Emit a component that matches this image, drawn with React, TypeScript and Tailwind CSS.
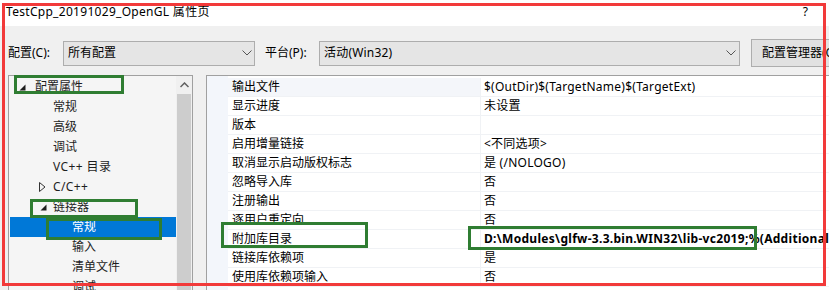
import React from "react";

const FONT = { fontFamily: '"Noto Sans", "Noto Sans CJK SC", sans-serif' };

function Chevron() {
  return (
    <svg width="10" height="6" viewBox="0 0 10 6" className="shrink-0">
      <path d="M0.5 0.5 L5 5 L9.5 0.5" fill="none" stroke="#555" strokeWidth="1" />
    </svg>
  );
}

function FilledTri() {
  return (
    <svg width="7" height="7" viewBox="0 0 7 7" className="shrink-0">
      <path d="M6.5 0.5 L6.5 6.5 L0.5 6.5 Z" fill="#1e1e1e" />
    </svg>
  );
}

function OpenTri() {
  return (
    <svg width="7" height="10" viewBox="0 0 7 10" className="shrink-0">
      <path d="M0.5 0.5 L6 5 L0.5 9.5 Z" fill="none" stroke="#333" strokeWidth="1" />
    </svg>
  );
}

type TreeItem = { label: string; level: number; icon?: "filled" | "open"; selected?: boolean };

const tree: TreeItem[] = [
  { label: "配置属性", level: 0, icon: "filled" },
  { label: "常规", level: 1 },
  { label: "高级", level: 1 },
  { label: "调试", level: 1 },
  { label: "VC++ 目录", level: 1 },
  { label: "C/C++", level: 1, icon: "open" },
  { label: "链接器", level: 1, icon: "filled" },
  { label: "常规", level: 2, selected: true },
  { label: "输入", level: 2 },
  { label: "清单文件", level: 2 },
  { label: "调试", level: 2 },
];

const rows: [string, string, boolean?][] = [
  ["输出文件", "$(OutDir)$(TargetName)$(TargetExt)"],
  ["显示进度", "未设置"],
  ["版本", ""],
  ["启用增量链接", "<不同选项>"],
  ["取消显示启动版权标志", "是 (/NOLOGO)"],
  ["忽略导入库", "否"],
  ["注册输出", "否"],
  ["逐用户重定向", "否"],
  ["附加库目录", "D:\\Modules\\glfw-3.3.bin.WIN32\\lib-vc2019;%(AdditionalLibraryDirectories)", true],
  ["链接库依赖项", "是"],
  ["使用库依赖项输入", "否"],
];

export default function App() {
  return (
    <div
      className="relative w-[829px] h-[290px] overflow-hidden bg-[#f0f0f0] text-[12px] text-black"
      style={FONT}
    >
      {/* title bar */}
      <div className="h-[26px] bg-white flex items-center justify-between pl-[6px] pr-[21px]">
        <span className="leading-none -mt-[2px] tracking-[0.3px]">TestCpp_20191029_OpenGL 属性页</span>
        <span className="leading-none -mt-[2px]">?</span>
      </div>

      {/* toolbar */}
      <div className="flex items-center h-[28px] mt-[13px] pl-[8px]">
        <span className="w-[55px] shrink-0 whitespace-nowrap">配置(C):</span>
        <div className="w-[192px] h-[25px] shrink-0 bg-[#e5e5e5] border border-[#adadad] flex items-center justify-between pl-[4px] pr-[2px]">
          <span>所有配置</span>
          <Chevron />
        </div>
        <span className="w-[54px] shrink-0 ml-[10px] whitespace-nowrap">平台(P):</span>
        <div className="w-[421px] h-[25px] shrink-0 bg-[#e5e5e5] border border-[#adadad] flex items-center justify-between pl-[4px] pr-[3px]">
          <span className="tracking-[0.2px]">活动(Win32)</span>
          <Chevron />
        </div>
        <div className="ml-[11px] w-[90px] h-[28px] shrink-0 bg-[#e1e1e1] border border-[#adadad] flex items-center pl-[10px] whitespace-nowrap">
          配置管理器(O)...
        </div>
      </div>

      {/* panels */}
      <div className="flex mt-[8px] pl-[8px] gap-[13px]">
        {/* tree */}
        <div className="w-[185px] h-[240px] shrink-0 border border-[#a0a0a0] bg-[#f5f5f5] flex">
          <div className="flex-1 pt-[1px] pl-[1px]">
            {tree.map((t, i) => (
              <div
                key={i}
                className={
                  "h-[20px] flex items-center " +
                  (t.selected ? "bg-[#0078d7] text-white" : "text-[#1e1e1e]")
                }
              >
                {t.level === 0 && (
                  <>
                    <span className="w-[9px] shrink-0" />
                    <FilledTri />
                    <span className="w-[9px] shrink-0" />
                  </>
                )}
                {t.level === 1 && (
                  <>
                    <span className="w-[29px] shrink-0" />
                    <span className="w-[14px] shrink-0 flex items-center">
                      {t.icon === "filled" && <span className="ml-[1px] flex"><FilledTri /></span>}
                      {t.icon === "open" && <OpenTri />}
                    </span>
                  </>
                )}
                {t.level === 2 && <span className="w-[62px] shrink-0" />}
                <span className={"whitespace-nowrap " + (t.label.includes("C") ? "tracking-[0.4px]" : "")}>{t.label}</span>
              </div>
            ))}
          </div>
          <div className="w-[16px] shrink-0 bg-[#f0f0f0] flex flex-col items-center">
            <div className="h-[18px] flex items-center justify-center">
              <svg width="9" height="6" viewBox="0 0 9 6">
                <path d="M0.5 5 L4.5 1 L8.5 5" fill="none" stroke="#606060" strokeWidth="1.5" />
              </svg>
            </div>
            <div className="w-[14px] flex-1 bg-[#cdcdcd]" />
          </div>
        </div>

        {/* property grid */}
        <div className="flex-1 h-[240px] border-t border-l border-[#a0a0a0] bg-white flex">
          <div className="w-[21px] shrink-0 bg-[#f3f6fb]" />
          <div className="flex-1 pt-[2px]">
            {rows.map(([k, v, bold], i) => (
              <div key={i} className="h-[19px] flex border-b border-[#f0f2f5]">
                <div
                  className={
                    "w-[253px] shrink-0 pl-[4px] flex items-center whitespace-nowrap border-r border-[#f0f2f5] " +
                    (i === 0 ? "bg-[#f4f6fa]" : "")
                  }
                >
                  {k}
                </div>
                <div
                  className={
                    "pl-[3px] flex items-center whitespace-nowrap " +
                    (bold ? "font-bold tracking-[0.3px]" : "tracking-[0.25px]")
                  }
                >
                  {v}
                </div>
              </div>
            ))}
          </div>
        </div>
      </div>

      {/* annotation boxes */}
      <div className="absolute left-[14px] top-[75px] w-[110px] h-[19px] border-[3px] border-[#2f7d32]" />
      <div className="absolute left-[30px] top-[199px] w-[108px] h-[19px] border-[3px] border-[#2f7d32]" />
      <div className="absolute left-[46px] top-[218px] w-[116px] h-[22px] border-[3px] border-[#2f7d32]" />
      <div className="absolute left-[221px] top-[222px] w-[147px] h-[26px] border-[3px] border-[#2f7d32]" />
      <div className="absolute left-[468px] top-[226px] w-[289px] h-[24px] border-[3px] border-[#2f7d32]" />
      <div className="absolute left-[2px] top-[3px] w-[824px] h-[283px] border-[3px] border-[#f23a3a]" />
    </div>
  );
}
